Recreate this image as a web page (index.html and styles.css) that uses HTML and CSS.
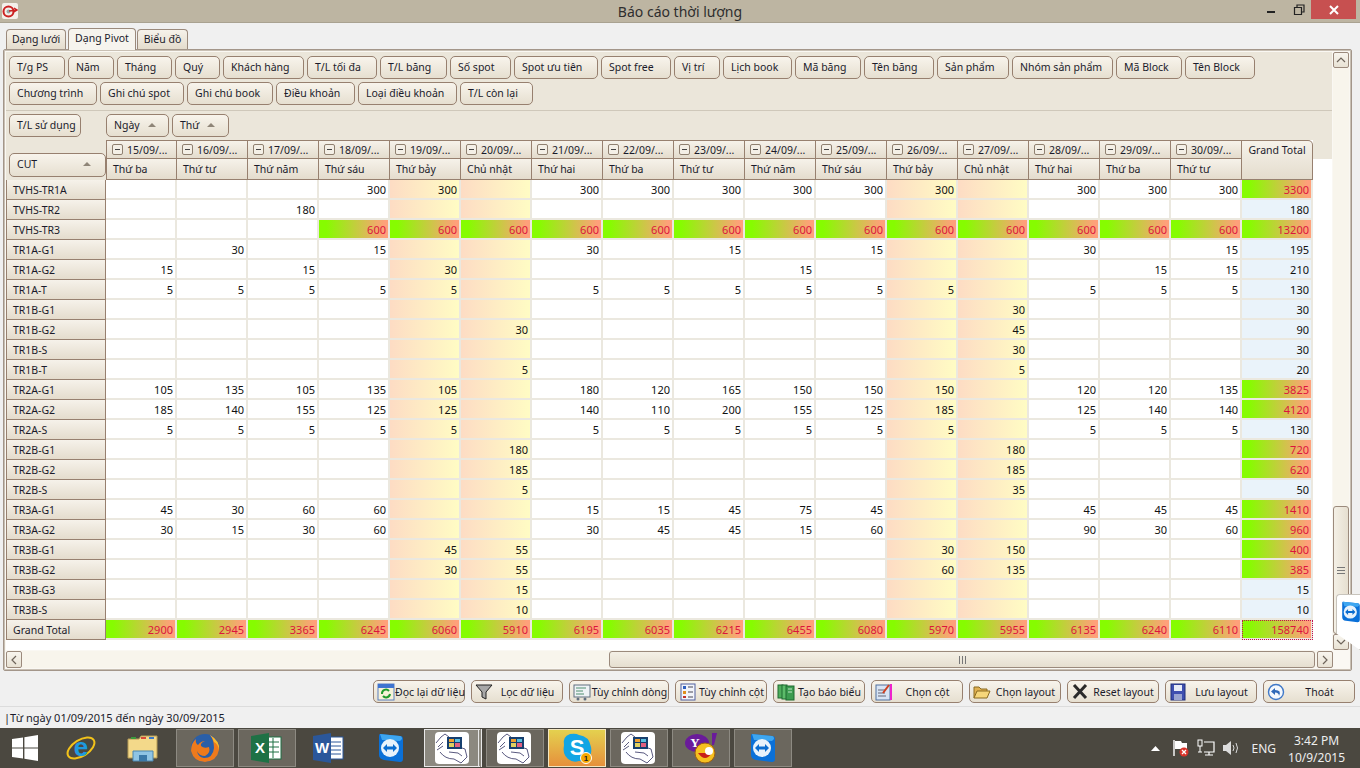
FILE: index.html
```html
<!DOCTYPE html>
<html lang="vi">
<head>
    <meta charset="UTF-8">
    <title>Báo cáo thời lượng</title>
    <link rel="stylesheet" href="styles.css">
</head>
<body>
    <svg class="defs" width="0" height="0">
        <symbol id="i-hand" viewBox="0 0 36 32">
            <rect x="1" y="0" width="34" height="32" rx="4" fill="#fff"/>
            <path d="M2 11 L7 5 L11 2 L15 5 M4 15 L9 10 M3 18 L9 14 M6 20 Q11 27 20 27 L27 31 L33 25 L31 17 L28 16 M15 20 L24 21 L28 24" fill="none" stroke="#5a5a80" stroke-width="1"/>
            <rect x="13" y="5" width="15" height="12" fill="#173f6e"/>
            <rect x="15" y="7" width="5" height="3" fill="#f0a030"/>
            <rect x="21" y="7" width="5" height="3" fill="#5cc0e0"/>
            <rect x="15" y="11" width="5" height="4" fill="#e0d060"/>
            <rect x="21" y="11" width="5" height="4" fill="#e06080"/>
        </symbol>
        <symbol id="i-tv" viewBox="0 0 26 30">
            <path d="M2 1 L22 3 Q25 3 25 6 L25 26 Q25 29 22 29 L6 27 Q1 26 1 22 L1 3 Q1 1 2 1 Z" fill="#0a70d8"/>
            <path d="M2 1 L22 3 Q24 3 24 6 L22 8 L4 7 Z" fill="#3ea6f0"/>
            <circle cx="12" cy="15" r="9" fill="#e8f2fb"/>
            <path d="M5 15 L9 11 V13.5 H15 V11 L19 15 L15 19 V16.5 H9 V19 Z" fill="#0a6ccf"/>
        </symbol>
    </svg>

    <div class="window">
        <header class="titlebar">
            <svg class="app-icon" width="16" height="16" viewBox="0 0 16 16">
                <rect width="16" height="16" rx="2" fill="#f4f0ea"/>
                <circle cx="6.5" cy="8.5" r="5" fill="none" stroke="#c22" stroke-width="2"/>
                <circle cx="6.5" cy="8.5" r="2" fill="#9aa"/>
                <path d="M7 8 L15 7 M12 5 L15 7 L12 9" stroke="#c22" stroke-width="1.4" fill="none"/>
            </svg>
            <span class="title">Báo cáo thời lượng</span>
            <div class="win-controls">
                <svg class="win-btn" width="25" height="19" viewBox="0 0 25 19"><rect x="6" y="11" width="8" height="2" fill="#222"/></svg>
                <svg class="win-btn" width="25" height="19" viewBox="0 0 25 19"><path d="M8.5 7.5h7v7h-7z M11 7V5h7v7h-2" fill="none" stroke="#222" stroke-width="1.2"/></svg>
                <div class="win-close">
                    <svg width="12" height="12" viewBox="0 0 12 12"><path d="M2 2 L10 10 M10 2 L2 10" stroke="#fff" stroke-width="2"/></svg>
                </div>
            </div>
        </header>

        <nav class="tabs">
            <div class="tab tab-grid">Dạng lưới</div>
            <div class="tab tab-pivot">Dạng Pivot</div>
            <div class="tab tab-chart">Biểu đồ</div>
        </nav>

        <section class="panel">
            <div class="panel-top">
                <div class="pivot">
                    <div class="filter-area" id="filters"></div>
                    <div class="data-area">
                        <button class="field field-used">T/L sử dụng</button>
                        <button class="field field-sort field-day">Ngày<i class="caret"></i></button>
                        <button class="field field-sort field-dow">Thứ<i class="caret"></i></button>
                    </div>
                    <table class="grid" id="grid"></table>
                </div>
                <div class="vscroll">
                    <div class="sb-btn">
                        <svg width="10" height="10" viewBox="0 0 10 10"><path d="M1 7 L5 3 L9 7" fill="none" stroke="#6d645a" stroke-width="1.2"/></svg>
                    </div>
                    <div class="vtrack">
                        <div class="vthumb"><span class="grip-h"></span></div>
                    </div>
                    <div class="sb-btn">
                        <svg width="10" height="10" viewBox="0 0 10 10"><path d="M1 3 L5 7 L9 3" fill="none" stroke="#6d645a" stroke-width="1.2"/></svg>
                    </div>
                </div>
            </div>
            <div class="hscroll">
                <div class="sb-btn">
                    <svg width="10" height="10" viewBox="0 0 10 10"><path d="M7 1 L3 5 L7 9" fill="none" stroke="#6d645a" stroke-width="1.2"/></svg>
                </div>
                <div class="htrack">
                    <div class="hthumb"><span class="grip-v"></span></div>
                </div>
                <div class="sb-btn">
                    <svg width="10" height="10" viewBox="0 0 10 10"><path d="M3 1 L7 5 L3 9" fill="none" stroke="#6d645a" stroke-width="1.2"/></svg>
                </div>
            </div>
        </section>

        <div class="toolbar">
            <button class="tool">
                <svg width="18" height="18" viewBox="0 0 18 18"><rect x="1" y="1" width="16" height="16" fill="#f6f2d8" stroke="#5a7fc0"/><rect x="1" y="1" width="16" height="4" fill="#3f74d0"/><path d="M5 11 A4 4 0 0 1 12 8 M13 11 A4 4 0 0 1 6 13" fill="none" stroke="#1f9a2e" stroke-width="2"/></svg>
                <span>Đọc lại dữ liệu</span>
            </button>
            <button class="tool">
                <svg width="18" height="18" viewBox="0 0 18 18"><path d="M1 2 H17 L11 9 V16 L7 14 V9 Z" fill="#a8a8a8" stroke="#222"/></svg>
                <span>Lọc dữ liệu</span>
            </button>
            <button class="tool tool-wide">
                <svg width="18" height="18" viewBox="0 0 18 18"><rect x="1" y="2" width="16" height="12" fill="#eef3f6" stroke="#607080"/><path d="M3 5h10M3 8h7M3 11h8" stroke="#4f8f70"/><circle cx="5" cy="16" r="1.5" fill="#607080"/><circle cx="12" cy="16" r="1.5" fill="#607080"/></svg>
                <span>Tùy chỉnh dòng</span>
            </button>
            <button class="tool">
                <svg width="18" height="18" viewBox="0 0 18 18"><rect x="2" y="1" width="14" height="16" fill="#f2f4fa" stroke="#5060a0"/><rect x="4" y="3" width="3" height="3" fill="#3060c0"/><rect x="4" y="8" width="3" height="3" fill="#e09020"/><rect x="4" y="13" width="3" height="2" fill="#c03030"/><path d="M9 4h5M9 9h5M9 14h5" stroke="#445"/></svg>
                <span>Tùy chỉnh cột</span>
            </button>
            <button class="tool">
                <svg width="18" height="18" viewBox="0 0 18 18"><rect x="1" y="2" width="5" height="13" fill="#4fae5c" stroke="#1e6a30"/><rect x="5" y="2" width="5" height="14" fill="#5cbc6a" stroke="#1e6a30"/><rect x="9" y="3" width="8" height="14" fill="#3c9c50" stroke="#1e6a30"/><path d="M11 6h4M11 9h4" stroke="#bfe6c6"/></svg>
                <span>Tạo báo biểu</span>
            </button>
            <button class="tool">
                <svg width="18" height="18" viewBox="0 0 18 18"><rect x="1" y="2" width="14" height="15" fill="#d8e4f4" stroke="#5070a0"/><rect x="15" y="1" width="2" height="16" fill="#ee22cc"/><path d="M3 7h7M3 10h7M3 13h8" stroke="#667"/><path d="M8 10 L14 2" stroke="#d04020" stroke-width="2"/></svg>
                <span>Chọn cột</span>
            </button>
            <button class="tool">
                <svg width="18" height="18" viewBox="0 0 18 18"><path d="M1 15 V4 H6 L8 6 H14 V8" fill="#e0b050" stroke="#8a6a20"/><path d="M1 15 L4 8 H17 L14 15 Z" fill="#f6d67a" stroke="#8a6a20"/></svg>
                <span>Chọn layout</span>
            </button>
            <button class="tool">
                <svg width="18" height="18" viewBox="0 0 18 18"><path d="M3 2 L15 15 M15 2 L3 15" stroke="#2a2a2a" stroke-width="3"/></svg>
                <span>Reset layout</span>
            </button>
            <button class="tool">
                <svg width="18" height="18" viewBox="0 0 18 18"><rect x="2" y="1" width="14" height="16" fill="#3f4fb0" stroke="#22307a"/><rect x="5" y="2" width="8" height="6" fill="#e8ecf6"/><rect x="5" y="11" width="8" height="6" fill="#9aa4d0"/></svg>
                <span>Lưu layout</span>
            </button>
            <button class="tool">
                <svg width="18" height="18" viewBox="0 0 18 18"><circle cx="9" cy="9" r="7.5" fill="#f4f8fd" stroke="#3f78c8" stroke-width="1.4"/><path d="M8 5 L4 8.5 L8 12 V9.5 Q12 9.5 12 13 Q15 7 8 7 Z" fill="#2f68b8"/></svg>
                <span>Thoát</span>
            </button>
        </div>

        <div class="statusbar">|Từ ngày 01/09/2015 đến ngày 30/09/2015</div>

        <footer class="taskbar">
            <div class="start">
                <svg width="26" height="26" viewBox="0 0 26 26"><path d="M0 4 L11 2.4 V12.4 H0 Z M12.4 2.2 L26 0 V12.4 H12.4 Z M0 13.6 H11 V23.6 L0 22 Z M12.4 13.6 H26 V26 L12.4 23.8 Z" fill="#fff"/></svg>
            </div>
            <div class="task">
                <svg width="32" height="32" viewBox="0 0 32 32"><ellipse cx="16" cy="16" rx="15" ry="8" transform="rotate(-32 16 16)" fill="none" stroke="#f2c21a" stroke-width="2"/><text x="16" y="24" class="logo-e">e</text></svg>
            </div>
            <div class="task">
                <svg width="32" height="28" viewBox="0 0 32 28"><path d="M1 5 H12 L14 2 H30 V24 H1 Z" fill="#f3d98a" stroke="#b59a55"/><rect x="4" y="3" width="5" height="2" fill="#3c9a3c"/><rect x="14" y="3" width="5" height="2" fill="#d84a3a"/><rect x="22" y="3" width="5" height="2" fill="#3a78c8"/><path d="M6 27 V17 H26 V27 Z" fill="#8fc4e4" stroke="#4a86b0"/><rect x="12" y="21" width="8" height="6" fill="#3a78a8"/></svg>
            </div>
            <div class="task task-on">
                <svg width="30" height="30" viewBox="0 0 30 30"><circle cx="15" cy="15" r="14" fill="#2a5fa8"/><path d="M20 2 Q30 8 29 17 Q27 28 15 29 Q4 29 1 18 Q1 10 6 6 Q5 10 8 12 Q11 8 15 8 Q10 10 11 13 Q14 16 19 14 Q21 20 15 23 Q9 23 7 18 Q8 24 14 25 Q23 25 24 15 Q24 7 20 2 Z" fill="#ee7a1c"/><path d="M20 2 Q30 8 29 17 Q28 11 24 9 Q23 5 20 2 Z" fill="#f6bb2e"/></svg>
            </div>
            <div class="task task-on">
                <svg width="32" height="32" viewBox="0 0 32 32"><rect x="14" y="5" width="16" height="22" fill="#fff" stroke="#1e7145"/><path d="M16 10h12M16 15h12M16 20h12M22 6v20" stroke="#1e7145"/><path d="M0 4 L18 1 V31 L0 28 Z" fill="#1e7145"/><text x="9" y="21" class="logo-x">X</text></svg>
            </div>
            <div class="task">
                <svg width="32" height="32" viewBox="0 0 32 32"><rect x="14" y="5" width="16" height="22" fill="#fff" stroke="#2b579a"/><path d="M18 10h10M18 14h10M18 18h10M18 22h10" stroke="#2b579a"/><path d="M0 4 L18 1 V31 L0 28 Z" fill="#2b579a"/><text x="9" y="21" class="logo-x">W</text></svg>
            </div>
            <div class="task">
                <svg width="26" height="30"><use href="#i-tv"/></svg>
            </div>
            <div class="task task-hot task-stack">
                <svg width="36" height="32"><use href="#i-hand"/></svg>
            </div>
            <div class="task task-on task-stack">
                <svg width="36" height="32"><use href="#i-hand"/></svg>
            </div>
            <div class="task task-skype">
                <svg width="32" height="32" viewBox="0 0 32 32"><path d="M9 2 Q15 1 18 3 Q28 4 30 15 Q31 20 29 23 Q26 30 18 29 Q12 31 7 27 Q1 22 3 13 Q1 5 9 2 Z" fill="#12a5e4"/><text x="16" y="23" class="logo-s">S</text><circle cx="25" cy="26" r="5.5" fill="#f7a800" stroke="#fff"/><text x="25" y="29" class="logo-n">1</text></svg>
            </div>
            <div class="task task-on task-stack">
                <svg width="36" height="32"><use href="#i-hand"/></svg>
            </div>
            <div class="task task-on">
                <svg width="34" height="32" viewBox="0 0 34 32"><ellipse cx="13" cy="11" rx="12" ry="9" fill="#6a1b9a"/><text x="11" y="15" class="logo-y">Y</text><path d="M28 1 L33 1 L30 13 L28 13 Z" fill="#6a1b9a"/><circle cx="21" cy="21" r="10" fill="#f6c020" stroke="#a06010"/><path d="M14 21 Q21 31 28 21 Z" fill="#c8201a"/><circle cx="25" cy="19" r="4" fill="#fff"/></svg>
            </div>
            <div class="task task-on">
                <svg width="26" height="30"><use href="#i-tv"/></svg>
            </div>

            <div class="tray">
                <svg class="tray-arrow" width="9" height="5" viewBox="0 0 9 5"><path d="M0 5 L4.5 0 L9 5 Z" fill="#fff"/></svg>
                <svg width="18" height="18" viewBox="0 0 18 18"><path d="M2 1 V17" stroke="#fff" stroke-width="1.4"/><path d="M3 2 H9 L10 4 H15 V10 H3 Z" fill="#fff"/><circle cx="12" cy="13" r="4.5" fill="#d9342b"/><path d="M10 11 L14 15 M14 11 L10 15" stroke="#fff" stroke-width="1.3"/></svg>
                <svg width="18" height="18" viewBox="0 0 18 18"><rect x="1" y="1" width="4" height="6" fill="none" stroke="#fff"/><path d="M3 7 V13" stroke="#fff"/><path d="M7 3 H17 V13 H7 M12 13 V16 M8 16 H16 M1 13 H5" fill="none" stroke="#fff" stroke-width="1.2"/></svg>
                <svg width="18" height="18" viewBox="0 0 18 18"><path d="M1 6 H4 L9 2 V16 L4 12 H1 Z" fill="#dcdcdc"/><path d="M11 6 Q13 9 11 12 M14 4 Q17 9 14 14" fill="none" stroke="#dcdcdc"/></svg>
                <span class="tray-lang">ENG</span>
                <div class="clock"><span>3:42 PM</span><span>10/9/2015</span></div>
            </div>
        </footer>
    </div>

    <div class="tv-tab">
        <svg width="20" height="22" viewBox="0 0 26 30"><use href="#i-tv"/></svg>
    </div>

    <script src="script.js"></script>
</body>
</html>
```

FILE: styles.css
```css
* {
    margin: 0;
    padding: 0;
    box-sizing: border-box;
}

body {
    width: 1360px;
    height: 768px;
    overflow: hidden;
    background-color: #f0f0f0;
    color: #1b1b2b;
    font-family: "Noto Sans", "Liberation Sans", sans-serif;
    font-size: 10.5px;
}

.defs {
    position: absolute;
}

.window {
    display: flex;
    flex-direction: column;
    height: 768px;
}

/* title bar */
.titlebar {
    display: flex;
    align-items: flex-start;
    height: 23px;
    background-color: #bdb5a2;
    border-bottom: 1px solid #a9a291;
}

.app-icon {
    margin: 3px 0 0 2px;
}

.title {
    flex: 1;
    text-align: center;
    font-size: 14px;
    line-height: 24px;
    color: #2e2e2e;
    padding-left: 81px;
}

.win-controls {
    display: flex;
    margin-right: 4px;
}

.win-close {
    display: flex;
    align-items: center;
    justify-content: center;
    width: 45px;
    height: 19px;
    background-color: #c75050;
}

/* tabs */
.tabs {
    display: flex;
    align-items: flex-end;
    height: 26px;
    padding-left: 6px;
    gap: 2px;
}

.tab {
    height: 20px;
    line-height: 18px;
    text-align: center;
    border: 1px solid #9b8a7c;
    border-bottom: none;
    border-radius: 4px 4px 0 0;
    background: linear-gradient(#f6f2ea, #e4dccd);
}

.tab-grid {
    width: 60px;
}

.tab-pivot {
    width: 68px;
    height: 22px;
    margin-bottom: -1px;
    background: #f6f4ee;
    position: relative;
    z-index: 1;
    margin-right: -1px;
}

.tab-chart {
    width: 51px;
}

/* main panel */
.panel {
    display: flex;
    flex-direction: column;
    width: 1349px;
    height: 622px;
    margin-left: 3px;
    padding: 2px;
    border: 1px solid #a3968a;
    border-radius: 2px;
    background-color: #faf8f3;
    box-shadow: inset 0 0 0 1px #c9c0b4;
}

.panel-top {
    display: flex;
    height: 598px;
}

.pivot {
    width: 1330px;
    height: 598px;
    background-color: #fff;
    overflow: hidden;
}

.filter-area {
    display: flex;
    flex-direction: column;
    gap: 3px;
    height: 59px;
    padding: 4px 0 0 3px;
    background-color: #ebe6da;
    border-bottom: 1px solid #cfc8ba;
}

.filter-line {
    display: flex;
    gap: 3px;
}

.field {
    height: 23px;
    padding: 0 0 2px 7px;
    text-align: left;
    font: inherit;
    font-weight: normal;
    color: inherit;
    border: 1px solid #97806f;
    border-radius: 5px;
    background: linear-gradient(#f8f4ec, #e6dfd0);
    white-space: nowrap;
    flex: none;
}

.data-area {
    display: flex;
    gap: 3px;
    height: 29px;
    padding: 3px 0 0 3px;
    background-color: #ebe6da;
}

.field-used {
    width: 72px;
    margin-right: 22px;
}

.field-sort {
    display: flex;
    align-items: center;
}

.field-day {
    width: 63px;
}

.field-dow {
    width: 57px;
}

.caret {
    width: 0;
    height: 0;
    margin-left: 8px;
    border-left: 4px solid transparent;
    border-right: 4px solid transparent;
    border-bottom: 4px solid #8f8578;
}

/* pivot table */
.grid {
    table-layout: fixed;
    width: 1330px;
    border-collapse: separate;
    border-spacing: 0;
    line-height: 14px;
}

.col-head {
    width: 100px;
}

.col-day {
    width: 71px;
}

.col-rest {
    width: 23px;
}

.corner {
    background-color: #ebe6da;
    vertical-align: bottom;
    padding: 0 0 3px 3px;
}

.corner .field {
    display: flex;
    align-items: center;
    width: 97px;
    height: 24px;
}

.corner .caret {
    margin-left: auto;
    margin-right: 14px;
}

.rest-head {
    background-color: #ebe6da;
}

.date-cell,
.dow-cell,
.total-head {
    font-weight: normal;
    text-align: left;
    white-space: nowrap;
    border-right: 1px solid #97806f;
    border-bottom: 1px solid #97806f;
    background: linear-gradient(#f6f2ea, #e4dccd);
}

.date-cell {
    height: 19px;
    padding-left: 5px;
    border-top: 1px solid #97806f;
}

.dow-cell {
    height: 21px;
    padding-left: 6px;
}

.first-day {
    border-left: 1px solid #97806f;
}

.total-head {
    text-align: center;
    vertical-align: top;
    padding-top: 2px;
    border-top: 1px solid #97806f;
    border-radius: 0 5px 0 0;
}

.minus {
    display: inline-block;
    width: 11px;
    height: 11px;
    margin-right: 4px;
    position: relative;
    top: 1px;
    border: 1px solid #8f8070;
    border-radius: 2px;
    background-color: #f4efe6;
}

.minus::after {
    content: "";
    display: block;
    width: 5px;
    height: 1px;
    margin: 4px 2px;
    background-color: #444;
}

.row-head {
    height: 20px;
    padding-left: 6px;
    font-weight: normal;
    text-align: left;
    border: 1px solid #97806f;
    border-top: none;
    background: linear-gradient(#f6f2ea, #e4dccd);
}

.cell {
    height: 20px;
    padding: 2px 2px 0 0;
    text-align: right;
    font-size: 11px;
    color: #111;
    border-right: 2px solid #ebe8df;
    border-bottom: 2px solid #ebe8df;
}

.weekend {
    background: linear-gradient(to right, #fddcc4, #fffcc4);
}

.hot {
    color: #dc143c;
    background: linear-gradient(to right, #86fc00, #86fc00 10%, #ffa07a 95%);
}

.total {
    background-color: #eaf3fa;
}

.focused {
    outline: 1px dotted #c01050;
    outline-offset: -1px;
}

/* scrollbars */
.sb-btn {
    display: flex;
    align-items: center;
    justify-content: center;
    width: 16px;
    height: 16px;
    flex: none;
    border: 1px solid #9b8a7c;
    border-radius: 2px;
    background: linear-gradient(#f8f5ee, #e8e2d4);
}

.vscroll {
    display: flex;
    flex-direction: column;
    width: 16px;
    margin-left: 1px;
}

.vtrack {
    flex: 1;
    display: flex;
    align-items: flex-end;
    background-color: #f8f5ec;
}

.vthumb {
    display: flex;
    align-items: center;
    justify-content: center;
    width: 16px;
    height: 128px;
    border: 1px solid #9b8a7c;
    border-radius: 3px;
    background: linear-gradient(to right, #f4f0e6, #e6dfd0);
}

.grip-h {
    width: 8px;
    height: 7px;
    border-top: 1px solid #777;
    border-bottom: 1px solid #777;
    background: linear-gradient(#777, #777) center / 100% 1px no-repeat;
}

.hscroll {
    display: flex;
    width: 1327px;
    height: 17px;
    margin-top: 1px;
}

.hscroll .sb-btn {
    height: 17px;
}

.htrack {
    flex: 1;
    display: flex;
    justify-content: flex-end;
    background-color: #f8f5ec;
}

.hthumb {
    display: flex;
    align-items: center;
    justify-content: center;
    width: 706px;
    height: 17px;
    margin-right: 2px;
    border: 1px solid #9b8a7c;
    border-radius: 3px;
    background: linear-gradient(#f4f0e6, #e6dfd0);
}

.grip-v {
    width: 7px;
    height: 8px;
    border-left: 1px solid #777;
    border-right: 1px solid #777;
    background: linear-gradient(#777, #777) center / 1px 100% no-repeat;
}

/* bottom toolbar */
.toolbar {
    display: flex;
    justify-content: flex-end;
    gap: 6px;
    height: 36px;
    padding: 9px 5px 0 0;
    border-bottom: 1px solid #dcdcdc;
}

.tool {
    display: flex;
    align-items: center;
    width: 92px;
    height: 23px;
    padding-left: 3px;
    font: inherit;
    color: inherit;
    border: 1px solid #97806f;
    border-radius: 5px;
    background: linear-gradient(#f8f4ec, #e6dfd0);
    white-space: nowrap;
}

.tool-wide {
    width: 100px;
}

.tool svg {
    flex: none;
}

.tool span {
    flex: 1;
    text-align: center;
}

.statusbar {
    height: 21px;
    line-height: 22px;
    padding-left: 4px;
    font-size: 11px;
}

/* taskbar */
.taskbar {
    display: flex;
    align-items: center;
    gap: 4px;
    height: 40px;
    background-color: #4b4840;
}

.start {
    display: flex;
    justify-content: center;
    width: 48px;
    padding-left: 2px;
}

.task {
    display: flex;
    align-items: center;
    justify-content: center;
    width: 58px;
    height: 38px;
    border: 1px solid transparent;
}

.task-on {
    background-color: #6b675e;
    border-color: #8d8a82;
}

.task-hot {
    background-color: #8c8980;
    border: 1px solid #e8e8e8;
    border-width: 1px 4px 1px 1px;
    border-right-style: double;
}

.task-stack {
    justify-content: flex-start;
    padding-left: 9px;
    box-shadow: inset -5px 0 0 #6b675e;
}

.task-hot.task-stack {
    box-shadow: none;
}

.task-skype {
    background: linear-gradient(#e4d14f, #e6903c);
    border-color: #f3e6c0;
}

.logo-e {
    font: bold 26px "Liberation Sans", sans-serif;
    fill: #1e9ae0;
    text-anchor: middle;
}

.logo-x {
    font: bold 15px "Liberation Sans", sans-serif;
    fill: #fff;
    text-anchor: middle;
}

.logo-s {
    font: bold 22px "Liberation Sans", sans-serif;
    fill: #fff;
    text-anchor: middle;
}

.logo-n {
    font: bold 8px "Liberation Sans", sans-serif;
    fill: #222;
    text-anchor: middle;
}

.logo-y {
    font: bold 13px "Liberation Serif", serif;
    fill: #fff;
    text-anchor: middle;
}

.tray {
    display: flex;
    align-items: center;
    gap: 7px;
    margin-left: auto;
    padding-right: 15px;
    color: #eee;
}

.tray-arrow {
    margin-right: 5px;
}

.tray-lang {
    margin: 0 5px 0 4px;
    font-size: 12px;
}

.clock {
    display: flex;
    flex-direction: column;
    align-items: center;
    gap: 1px;
    margin-top: 2px;
    font-size: 12px;
    line-height: 16px;
}

/* teamviewer side tab */
.tv-tab {
    position: absolute;
    left: 1336px;
    top: 594px;
    width: 24px;
    height: 56px;
    padding: 6px 0 0 4px;
    background-color: #fff;
    border: 1px solid #c8c4bc;
    border-right: none;
    border-radius: 4px 0 0 4px;
    clip-path: polygon(0 0, 100% 0, 100% 100%, 0 70%);
}
```

FILE: script.js
```js
const filters = [
    [['T/g PS', 56], ['Năm', 46], ['Tháng', 55], ['Quý', 45], ['Khách hàng', 81], ['T/L tối đa', 70], ['T/L băng', 67], ['Số spot', 61], ['Spot ưu tiên', 84], ['Spot free', 70], ['Vị trí', 46], ['Lịch book', 69], ['Mã băng', 66], ['Tên băng', 70], ['Sản phẩm', 72], ['Nhóm sản phẩm', 101], ['Mã Block', 66], ['Tên Block', 70]],
    [['Chương trình', 88], ['Ghi chú spot', 84], ['Ghi chú book', 86], ['Điều khoản', 79], ['Loại điều khoản', 99], ['T/L còn lại', 73]]
]

const filterArea = document.getElementById('filters')

filters.forEach((line) => {
    const lineEl = document.createElement('div')
    lineEl.className = 'filter-line'
    line.forEach(([label, width]) => {
        const button = document.createElement('button')
        button.className = 'field'
        button.textContent = label
        button.style.width = width + 'px'
        lineEl.appendChild(button)
    })
    filterArea.appendChild(lineEl)
})

const days = ['Thứ ba', 'Thứ tư', 'Thứ năm', 'Thứ sáu', 'Thứ bảy', 'Chủ nhật', 'Thứ hai', 'Thứ ba', 'Thứ tư', 'Thứ năm', 'Thứ sáu', 'Thứ bảy', 'Chủ nhật', 'Thứ hai', 'Thứ ba', 'Thứ tư']
const weekend = [4, 5, 11, 12]

// 16 ngày + cột Grand Total
const rows = [
    ['TVHS-TR1A', [, , , 300, 300, , 300, 300, 300, 300, 300, 300, , 300, 300, 300, 3300]],
    ['TVHS-TR2', [, , 180, , , , , , , , , , , , , , 180]],
    ['TVHS-TR3', [, , , 600, 600, 600, 600, 600, 600, 600, 600, 600, 600, 600, 600, 600, 13200]],
    ['TR1A-G1', [, 30, , 15, , , 30, , 15, , 15, , , 30, , 15, 195]],
    ['TR1A-G2', [15, , 15, , 30, , , , , 15, , , , , 15, 15, 210]],
    ['TR1A-T', [5, 5, 5, 5, 5, , 5, 5, 5, 5, 5, 5, , 5, 5, 5, 130]],
    ['TR1B-G1', [, , , , , , , , , , , , 30, , , , 30]],
    ['TR1B-G2', [, , , , , 30, , , , , , , 45, , , , 90]],
    ['TR1B-S', [, , , , , , , , , , , , 30, , , , 30]],
    ['TR1B-T', [, , , , , 5, , , , , , , 5, , , , 20]],
    ['TR2A-G1', [105, 135, 105, 135, 105, , 180, 120, 165, 150, 150, 150, , 120, 120, 135, 3825]],
    ['TR2A-G2', [185, 140, 155, 125, 125, , 140, 110, 200, 155, 125, 185, , 125, 140, 140, 4120]],
    ['TR2A-S', [5, 5, 5, 5, 5, , 5, 5, 5, 5, 5, 5, , 5, 5, 5, 130]],
    ['TR2B-G1', [, , , , , 180, , , , , , , 180, , , , 720]],
    ['TR2B-G2', [, , , , , 185, , , , , , , 185, , , , 620]],
    ['TR2B-S', [, , , , , 5, , , , , , , 35, , , , 50]],
    ['TR3A-G1', [45, 30, 60, 60, , , 15, 15, 45, 75, 45, , , 45, 45, 45, 1410]],
    ['TR3A-G2', [30, 15, 30, 60, , , 30, 45, 45, 15, 60, , , 90, 30, 60, 960]],
    ['TR3B-G1', [, , , , 45, 55, , , , , , 30, 150, , , , 400]],
    ['TR3B-G2', [, , , , 30, 55, , , , , , 60, 135, , , , 385]],
    ['TR3B-G3', [, , , , , 15, , , , , , , , , , , 15]],
    ['TR3B-S', [, , , , , 10, , , , , , , , , , , 10]],
    ['Grand Total', [2900, 2945, 3365, 6245, 6060, 5910, 6195, 6035, 6215, 6455, 6080, 5970, 5955, 6135, 6240, 6110, 158740]]
]

let html = '<colgroup><col class="col-head">'
for (let i = 0; i < 17; i++) html += '<col class="col-day">'
html += '<col class="col-rest"></colgroup>'

html += '<tr><th class="corner" rowspan="2"><button class="field">CUT<i class="caret"></i></button></th>'
days.forEach((day, i) => {
    const date = String(15 + i).padStart(2, '0')
    html += `<th class="date-cell${i === 0 ? ' first-day' : ''}"><span class="minus"></span>${date}/09/...</th>`
})
html += '<th class="total-head" rowspan="2">Grand Total</th><th class="rest-head"></th></tr><tr>'
days.forEach((day, i) => {
    html += `<th class="dow-cell${i === 0 ? ' first-day' : ''}">${day}</th>`
})
html += '<td></td></tr>'

rows.forEach(([name, values]) => {
    html += `<tr><th class="row-head">${name}</th>`
    for (let i = 0; i < 17; i++) {
        const value = values[i]
        let cls = 'cell'
        if (value >= 385) cls += ' hot'
        else if (i === 16) cls += ' total'
        else if (weekend.includes(i)) cls += ' weekend'
        if (value === 158740) cls += ' focused'
        html += `<td class="${cls}">${value === undefined ? '' : value}</td>`
    }
    html += '<td></td></tr>'
})

document.getElementById('grid').innerHTML = html
```
